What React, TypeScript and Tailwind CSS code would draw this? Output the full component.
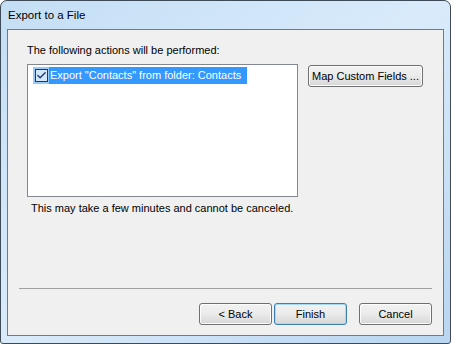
import { Check } from "lucide-react";

const font = { fontFamily: '"Liberation Sans", Arial, sans-serif' };

const Button = ({ label, primary }: { label: string; primary?: boolean }) => (
    <button
        className={`h-[22px] w-[73px] rounded-[3px] border text-[11px] text-black bg-gradient-to-b from-[#f2f2f2] via-[#ebebeb] to-[#d6d6d6] ${
            primary ? "border-[#3c7fb1] shadow-[inset_0_0_0_1px_#a6d9f4]" : "border-[#707070] shadow-[inset_0_0_0_1px_#fcfcfc]"
        }`}
    >
        {label}
    </button>
);

export default function App() {
    return (
        <div
            style={font}
            className="w-[451px] h-[344px] flex flex-col rounded-t-[7px] rounded-b-[3px] border border-[#3d4a58] bg-gradient-to-br from-[#c4def5] via-[#d9ebfb] to-[#b9d5f0] px-[6px] pb-[7px]"
        >
            <div className="h-[28px] flex items-center pl-[1px] pt-[2px] text-[11.5px] text-black">
                Export to a File
            </div>

            <div className="flex-1 flex flex-col border border-[#6e7b8a] bg-[#f0f0f0] px-[11px]">
                <p className="mt-[13px] ml-[8px] text-[11px] leading-[15px] text-black">
                    The following actions will be performed:
                </p>

                <div className="flex items-start mt-[6px] ml-[8px]">
                    <div className="w-[271px] h-[133px] border border-[#828790] bg-white p-[1px]">
                        <div className="flex items-center h-[17px] mt-[1px] ml-[4px]">
                            <div className="h-full w-[16px] bg-[#99c9f7] flex items-center justify-center">
                                <div className="w-[13px] h-[13px] border border-[#1c3a63] bg-[#d4e6fb] flex items-center justify-center">
                                    <Check size={11} strokeWidth={3} className="text-[#1a3d6b]" />
                                </div>
                            </div>
                            <div className="h-full bg-[#3399ff] text-white text-[11px] leading-[17px] pl-[1px] pr-[6px]">
                                Export "Contacts" from folder: Contacts
                            </div>
                        </div>
                    </div>
                    <button className="ml-[10px] mt-[1px] h-[22px] w-[115px] whitespace-nowrap rounded-[3px] border border-[#707070] bg-gradient-to-b from-[#f2f2f2] via-[#ebebeb] to-[#d6d6d6] text-[11px] text-black shadow-[inset_0_0_0_1px_#fcfcfc]">
                        Map Custom Fields ...
                    </button>
                </div>

                <p className="mt-[4px] ml-[12px] text-[11px] leading-[15px] text-black">
                    This may take a few minutes and cannot be canceled.
                </p>

                <div className="flex-1" />

                <div className="border-t border-[#a0a0a0] mb-[14px]" />

                <div className="flex justify-end gap-[2px] mb-[10px]">
                    <Button label="< Back" />
                    <Button label="Finish" primary />
                    <div className="w-[8px]" />
                    <Button label="Cancel" />
                </div>
            </div>
        </div>
    );
}
